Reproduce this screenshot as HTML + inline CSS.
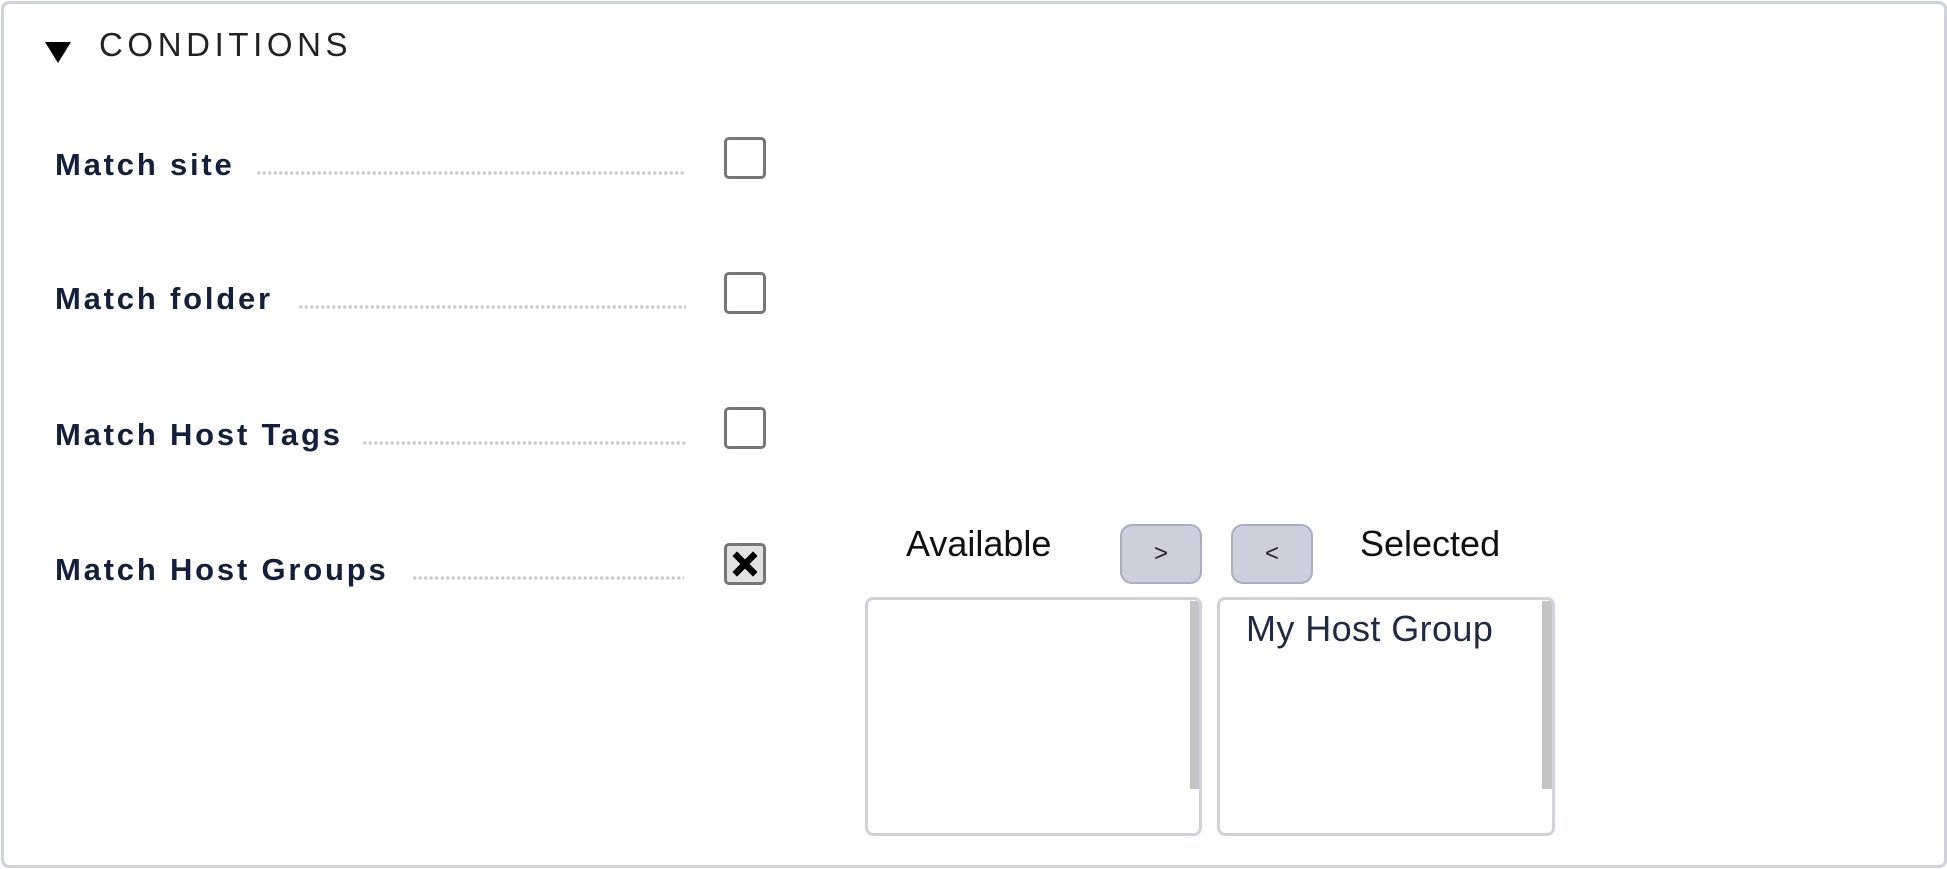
<!DOCTYPE html>
<html><head><meta charset="utf-8"><style>
html,body{margin:0;padding:0;background:#fff;}
body{width:1947px;height:869px;position:relative;overflow:hidden;font-family:"Liberation Sans",sans-serif;}
.box{position:absolute;left:1px;top:1px;width:1940px;height:861px;border:3px solid #cfd1de;border-radius:8px;}
.a{position:absolute;white-space:nowrap;line-height:1;}
.lbl{font-weight:bold;font-size:31px;letter-spacing:2.8px;color:#13203d;}
.dots{position:absolute;height:4px;background-image:radial-gradient(circle,#cbcbcb 1.6px,transparent 1.9px);background-size:5.5px 4px;}
.cb{position:absolute;left:724px;width:36px;height:36px;border:3px solid #767676;border-radius:5px;background:#fff;}
.btn{position:absolute;top:524px;width:78px;height:56px;background:#cdcfdc;border:2px solid #a9acc3;border-radius:12px;font-size:24px;color:#222;text-align:center;line-height:56px;}
.list{position:absolute;top:597px;height:233px;border:3px solid #cfd1de;border-radius:8px;background:#fff;overflow:hidden;}
.sb{position:absolute;top:1px;width:12px;height:188px;background:#c4c4c4;}
.txt{font-size:36px;color:#111;}
</style></head><body>
<div class="box"></div>
<svg class="a" style="left:45px;top:42px" width="27" height="22"><polygon points="0,0 26,0 13,21" fill="#000"/></svg>
<div class="a" style="left:99px;top:28px;font-size:33px;letter-spacing:4.6px;color:#222;">CONDITIONS</div>

<div class="a lbl" style="left:55px;top:149px;">Match site</div>
<div class="dots" style="left:256px;top:171px;width:430px"></div>
<div class="cb" style="top:137px"></div>

<div class="a lbl" style="left:55px;top:283px;">Match folder</div>
<div class="dots" style="left:298px;top:305px;width:388px"></div>
<div class="cb" style="top:272px"></div>

<div class="a lbl" style="left:55px;top:419px;">Match Host Tags</div>
<div class="dots" style="left:362px;top:441px;width:324px"></div>
<div class="cb" style="top:407px"></div>

<div class="a lbl" style="left:55px;top:554px;">Match Host Groups</div>
<div class="dots" style="left:412px;top:576px;width:272px"></div>
<div class="cb" style="top:543px;background:#e2e2e2;"><svg width="36" height="36"><path d="M10 10 L26 26 M26 10 L10 26" stroke="#000" stroke-width="6.5" stroke-linecap="square"/></svg></div>

<div class="a txt" style="left:906px;top:526px;">Available</div>
<div class="btn" style="left:1120px;">&gt;</div>
<div class="btn" style="left:1231px;">&lt;</div>
<div class="a txt" style="left:1360px;top:526px;">Selected</div>

<div class="list" style="left:865px;width:331px;"><div class="sb" style="left:322px"></div></div>
<div class="list" style="left:1217px;width:332px;"><div class="sb" style="left:322px"></div>
<div class="a" style="left:26px;top:11px;font-size:36px;letter-spacing:0.4px;color:#1e2a46;">My Host Group</div></div>
</body></html>
